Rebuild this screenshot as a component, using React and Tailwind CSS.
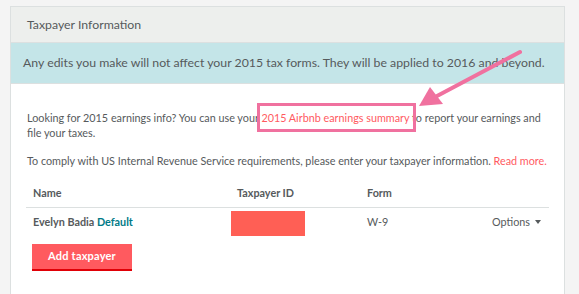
export default function App() {
  const font = { fontFamily: 'Lato, "Liberation Sans", sans-serif' };
  return (
    <div className="w-[579px] h-[294px] overflow-hidden bg-[#f4f4f4] relative" style={font}>
      <div className="absolute left-[10px] top-[6px] w-[555px] h-[300px] bg-white border border-[#dce0e0]">
        <div className="h-[36px] bg-[#edefed] border-b border-[#dce0e0] flex items-center pt-[2px] pl-[16px] text-[12.3px] text-[#565a5c] whitespace-nowrap">
          Taxpayer Information
        </div>
        <div className="h-[41px] bg-[#c4e5e8] border-b border-[#dce0e0] flex items-center pt-[1px] pl-[12px] text-[12.3px] text-[#565a5c] whitespace-nowrap">
          Any edits you make will not affect your 2015 tax forms. They will be applied to 2016 and beyond.
        </div>
        <div className="px-[15px] pt-[26px] text-[10.8px] text-[#565a5c] whitespace-nowrap">
          <p className="leading-[15px] pl-[1px]">
            Looking for 2015 earnings info? You can use your <span className="text-[#ff5a5f]">2015 Airbnb earnings summary</span> to report your earnings and
            <br />
            file your taxes.
          </p>
          <p className="leading-[15px] mt-[13px] pl-[1px]">
            To comply with US Internal Revenue Service requirements, please enter your taxpayer information. <span className="text-[#ff5a5f]">Read more.</span>
          </p>
          <div className="mt-[12px] w-[523px]">
            <div className="flex h-[28px] items-center border-b border-[#dce0e0] font-bold">
              <div className="w-[205px] pl-[7px]">Name</div>
              <div className="w-[136px] pl-[6px]">Taxpayer ID</div>
              <div className="flex-1">Form</div>
            </div>
            <div className="flex h-[30px] items-start">
              <div className="w-[205px] pl-[7px] pt-[7px] leading-[13px] font-bold">Evelyn Badia <span className="text-[#007a87]">Default</span></div>
              <div className="w-[136px] pt-[3px]">
                <div className="w-[74px] h-[25px] bg-[#ff5f55]"></div>
              </div>
              <div className="flex-1 pt-[7px] leading-[13px]">W-9</div>
              <div className="pr-[8px] pt-[7px] leading-[13px] flex items-center gap-[5px]">
                Options
                <svg width="6" height="4" viewBox="0 0 6 4"><path d="M0 0h6L3 4z" fill="#565a5c" /></svg>
              </div>
            </div>
          </div>
          <button className="mt-[6px] ml-[6px] w-[100px] h-[27px] bg-[#ff5a5f] border-b-2 border-[#e00007] text-white font-bold text-[11px] tracking-[0.2px]">
            Add taxpayer
          </button>
        </div>
      </div>
      <div className="absolute left-[257px] top-[103px] w-[159px] h-[29px] border-[3px] border-[#f0719f]"></div>
      <svg className="absolute left-0 top-0" width="579" height="294" viewBox="0 0 579 294">
        <line x1="520" y1="52" x2="437" y2="96" stroke="#f0719f" strokeWidth="4" strokeLinecap="round" />
        <polygon points="419,106 430,87 443,104" fill="#f0719f" />
      </svg>
    </div>
  );
}
